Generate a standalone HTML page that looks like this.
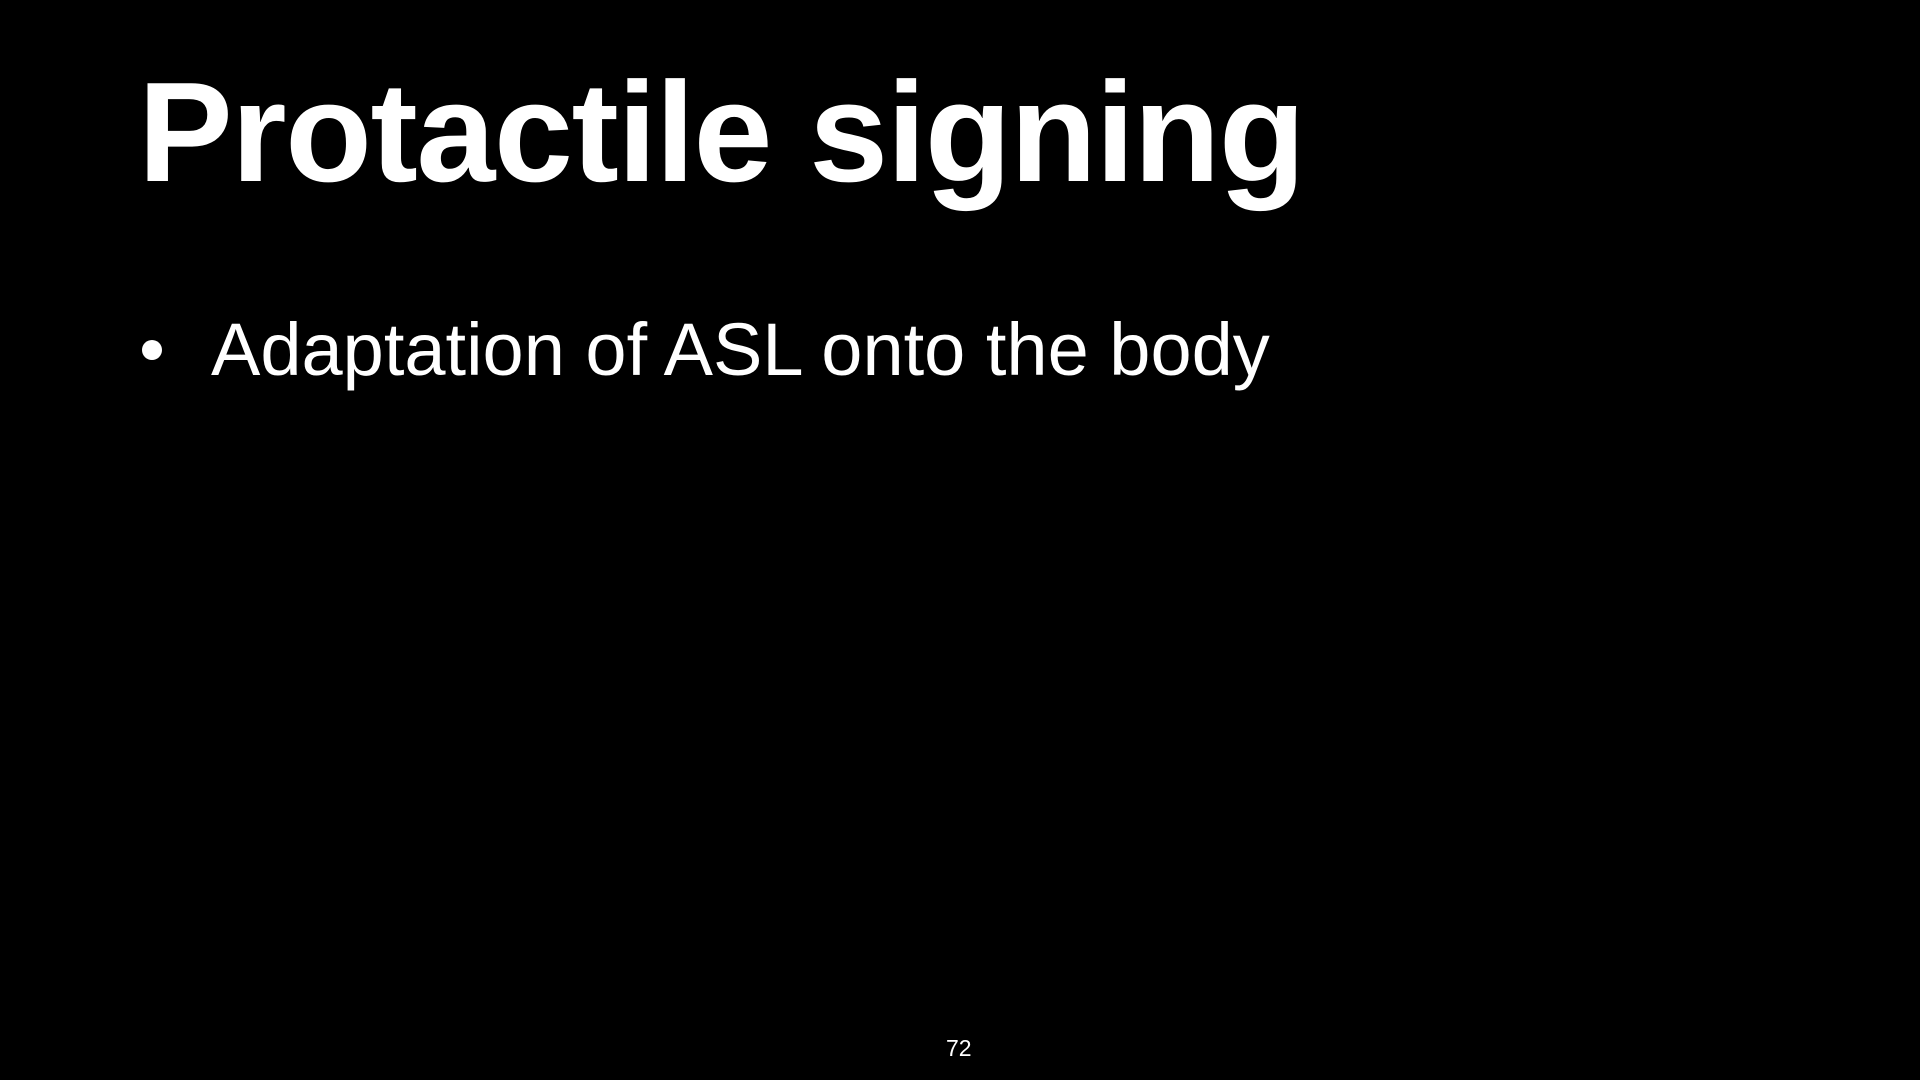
<!DOCTYPE html>
<html><head><meta charset="utf-8"><style>
html,body{margin:0;padding:0;background:#000;width:1920px;height:1080px;overflow:hidden}
body{position:relative;font-family:"Liberation Sans",Arial,sans-serif;color:#fff}
.t{position:absolute;left:138px;top:62px;font-size:142px;font-weight:bold;line-height:1;letter-spacing:-1.4px;white-space:nowrap}
.b{position:absolute;left:211px;top:313px;font-size:74px;line-height:1;white-space:nowrap;letter-spacing:0px}
.dot{position:absolute;left:142px;top:340px;width:20px;height:20px;border-radius:50%;background:#fff}
.n{position:absolute;left:946px;top:1037px;font-size:23px;line-height:1}
</style></head><body>
<div class="t">Protactile signing</div>
<div class="dot"></div>
<div class="b">Adaptation of ASL onto the body</div>
<div class="n">72</div>
</body></html>
